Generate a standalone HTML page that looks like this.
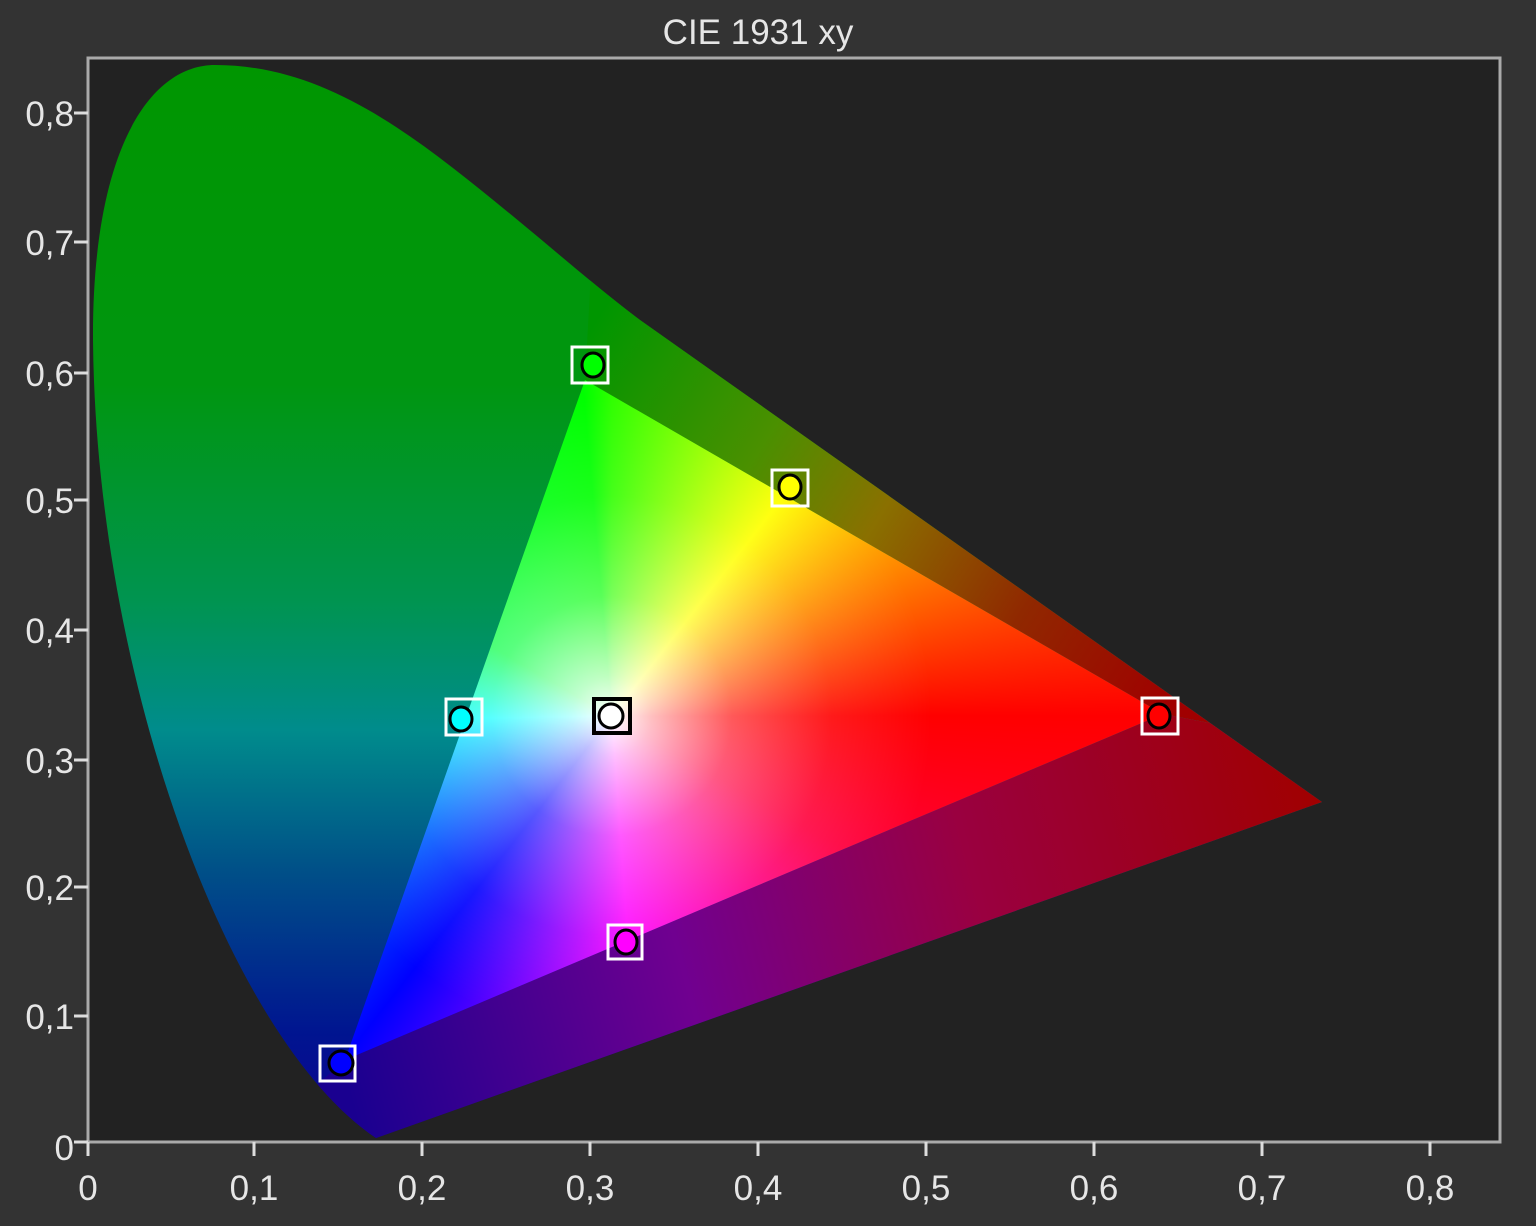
<!DOCTYPE html>
<html><head><meta charset="utf-8"><style>
html,body{margin:0;padding:0;background:#333;}
svg{display:block;position:absolute;left:0;top:0}
text{font-family:"Liberation Sans",sans-serif;fill:#e6e6e6}
#tri{position:absolute;left:0;top:0;width:1536px;height:1226px;
clip-path:polygon(585px 380px,1163px 714px,345px 1060px);
background:
radial-gradient(circle at 612px 716px, rgba(255,255,255,1) 0px, rgba(255,255,255,0.75) 40px, rgba(255,255,255,0.35) 120px, rgba(255,255,255,0.1) 220px, rgba(255,255,255,0) 320px),
conic-gradient(from 0deg at 612px 716px, #30ff00 0deg, #ffff00 38deg, #ff0000 90deg, #ff0040 120deg, #ff00ff 176deg, #0000ff 218deg, #00ffff 269deg, #00ff40 300deg, #00ff00 355deg, #30ff00 360deg);}
</style></head><body>
<svg width="1536" height="1226" viewBox="0 0 1536 1226" xmlns="http://www.w3.org/2000/svg">
<defs>
<linearGradient id="loc" x1="0" y1="60" x2="0" y2="1140" gradientUnits="userSpaceOnUse">
<stop offset="0" stop-color="#009600"/>
<stop offset="0.3" stop-color="#009610"/>
<stop offset="0.5" stop-color="#009450"/>
<stop offset="0.62" stop-color="#008c8c"/>
<stop offset="0.75" stop-color="#005088"/>
<stop offset="0.9" stop-color="#001590"/>
<stop offset="1" stop-color="#100090"/>
</linearGradient>
<linearGradient id="bot" x1="340" y1="1060" x2="1320" y2="800" gradientUnits="userSpaceOnUse">
<stop offset="0" stop-color="#1a0090"/>
<stop offset="0.35" stop-color="#700090"/>
<stop offset="0.65" stop-color="#9a0040"/>
<stop offset="1" stop-color="#a00000"/>
</linearGradient>
<linearGradient id="top" x1="590" y1="330" x2="1170" y2="700" gradientUnits="userSpaceOnUse">
<stop offset="0" stop-color="#009600"/>
<stop offset="0.3" stop-color="#4a9000"/>
<stop offset="0.5" stop-color="#8a7000"/>
<stop offset="0.75" stop-color="#902800"/>
<stop offset="1" stop-color="#a00000"/>
</linearGradient>
<clipPath id="lc"><path d="M376,1138 C230,1040 96,680 93,340 C92,150 150,65 215,65 C330,65 420,140 520,222 C560,255 600,290 640,320 L1322,802 Z"/></clipPath>
</defs>
<rect x="88" y="58" width="1412" height="1084" fill="#222" stroke="#aaa" stroke-width="3"/>
<g clip-path="url(#lc)">
<rect x="80" y="50" width="1300" height="1100" fill="url(#loc)"/>
<polygon points="345,1060 1163,714 1400,760 1400,1200 380,1200 300,1100" fill="url(#bot)"/>
<polygon points="585,380 595,200 1400,200 1400,760 1163,714" fill="url(#top)"/>
</g>
</svg>
<div id="tri"></div>
<svg width="1536" height="1226" viewBox="0 0 1536 1226" xmlns="http://www.w3.org/2000/svg">
<g stroke="#fff" stroke-width="3" fill="none">
<rect x="572" y="347" width="36" height="36"/>
<rect x="772" y="470" width="36" height="36"/>
<rect x="446" y="699" width="36" height="36"/>
<rect x="1142" y="698" width="36" height="36"/>
<rect x="608" y="925" width="34" height="34"/>
<rect x="320" y="1046" width="35" height="35"/>
<rect x="594" y="699" width="36" height="34" stroke="#000" stroke-width="4"/>
</g>
<g stroke="#000" stroke-width="3">
<ellipse cx="593" cy="365" rx="11" ry="12" fill="#00ff00"/>
<ellipse cx="790" cy="487" rx="11" ry="12" fill="#ffff00"/>
<ellipse cx="461" cy="719" rx="11" ry="12" fill="#00ffff"/>
<ellipse cx="1159" cy="716" rx="11" ry="12" fill="#ff0000"/>
<ellipse cx="626" cy="942" rx="11" ry="12" fill="#ff00ff"/>
<ellipse cx="341" cy="1063" rx="12" ry="12" fill="#0000ff"/>
<ellipse cx="611" cy="716" rx="12" ry="12" fill="#fff"/>
</g>
<g stroke="#ddd" stroke-width="3">
<line x1="88" y1="1142" x2="88" y2="1156"/><line x1="254" y1="1142" x2="254" y2="1156"/><line x1="422" y1="1142" x2="422" y2="1156"/><line x1="590" y1="1142" x2="590" y2="1156"/><line x1="758" y1="1142" x2="758" y2="1156"/><line x1="926" y1="1142" x2="926" y2="1156"/><line x1="1094" y1="1142" x2="1094" y2="1156"/><line x1="1262" y1="1142" x2="1262" y2="1156"/><line x1="1430" y1="1142" x2="1430" y2="1156"/>
<line x1="74" y1="1142" x2="88" y2="1142"/><line x1="74" y1="1016" x2="88" y2="1016"/><line x1="74" y1="887" x2="88" y2="887"/><line x1="74" y1="760" x2="88" y2="760"/><line x1="74" y1="630" x2="88" y2="630"/><line x1="74" y1="500" x2="88" y2="500"/><line x1="74" y1="373" x2="88" y2="373"/><line x1="74" y1="242" x2="88" y2="242"/><line x1="74" y1="113" x2="88" y2="113"/>
</g>
<text x="758" y="44" font-size="35" text-anchor="middle">CIE 1931 xy</text>
<g font-size="35" text-anchor="middle">
<text x="88" y="1200">0</text><text x="254" y="1200">0,1</text><text x="422" y="1200">0,2</text><text x="590" y="1200">0,3</text><text x="758" y="1200">0,4</text><text x="926" y="1200">0,5</text><text x="1094" y="1200">0,6</text><text x="1262" y="1200">0,7</text><text x="1430" y="1200">0,8</text>
</g>
<g font-size="35" text-anchor="end">
<text x="74" y="1160">0</text><text x="74" y="1029">0,1</text><text x="74" y="900">0,2</text><text x="74" y="773">0,3</text><text x="74" y="643">0,4</text><text x="74" y="513">0,5</text><text x="74" y="386">0,6</text><text x="74" y="255">0,7</text><text x="74" y="126">0,8</text>
</g>
</svg>
</body></html>
